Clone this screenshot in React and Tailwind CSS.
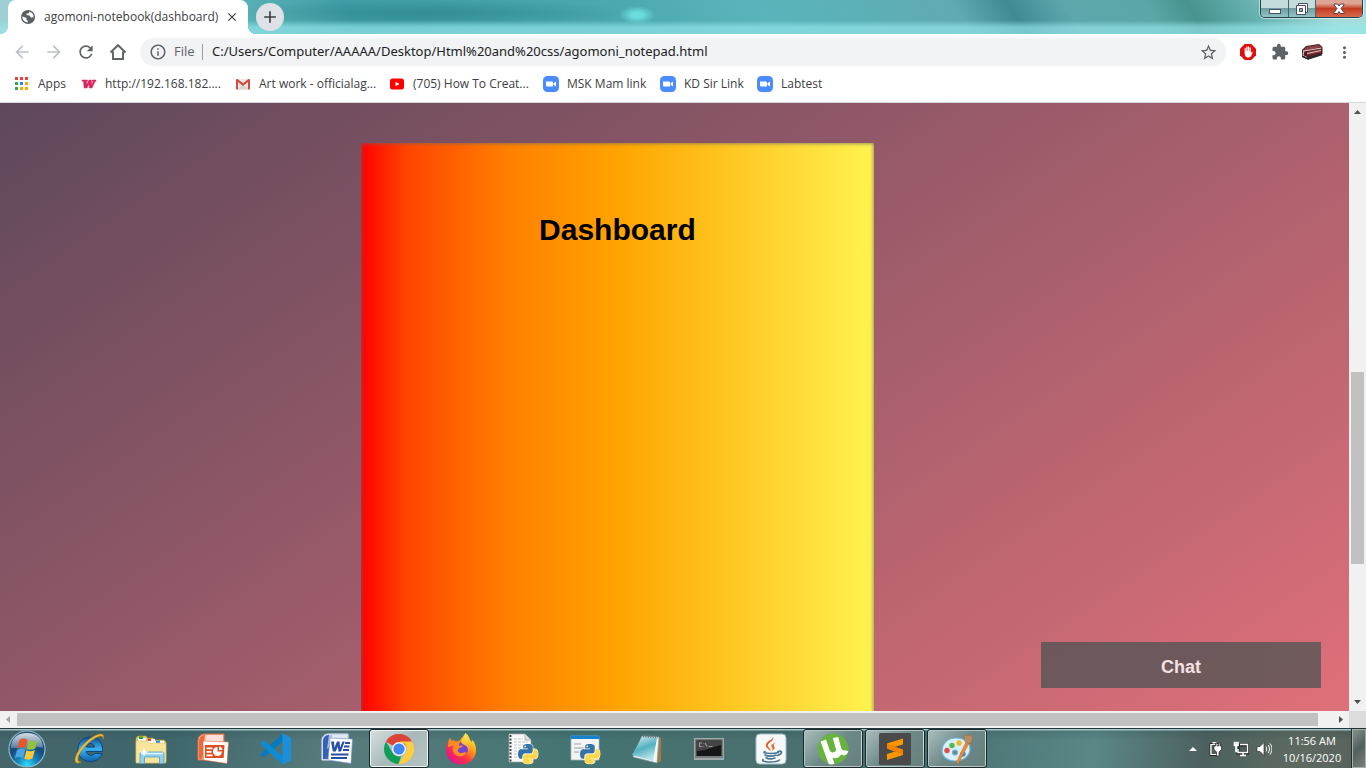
import React from "react";
import {
  MdArrowBack,
  MdArrowForward,
  MdRefresh,
  MdOutlineInfo,
  MdStarBorder,
  MdExtension,
  MdMoreVert,
  MdClose,
  MdAdd,
} from "react-icons/md";

const UI = "font-['Open_Sans','Noto_Sans',sans-serif]";

/* ---------- Title bar ---------- */

function WindowControls() {
  return (
    <div className="flex h-[18px] self-start mr-[3px] rounded-b-[5px] border border-t-0 border-[#20464c] overflow-hidden shadow-[0_0_0_1px_rgba(255,255,255,0.5)]">
      <button aria-label="Minimize" className="w-7 flex items-center justify-center border-r border-[#41686c] bg-linear-to-b from-[#c2dddc] from-45% via-[#6f9fa1] via-50% to-[#93c5c5]">
        <svg width="14" height="14" viewBox="0 0 14 14">
          <rect x="1.500" y="7.500" width="11" height="4" fill="#fff" stroke="#4a4f66" />
        </svg>
      </button>
      <button aria-label="Restore" className="w-[27px] flex items-center justify-center border-r border-[#41686c] bg-linear-to-b from-[#c2dddc] from-45% via-[#6f9fa1] via-50% to-[#93c5c5]">
        <svg width="14" height="14" viewBox="0 0 14 14">
          <path d="M3.500 1.500h9v9h-9z" fill="#fff" stroke="#4a4f66" />
          <path d="M1.500 3.500h9v9h-9z" fill="#fff" stroke="#4a4f66" />
          <path d="M4.500 6.500h3v3h-3z" fill="#8bb4b5" stroke="#4a4f66" />
        </svg>
      </button>
      <button aria-label="Close" className="w-[46px] flex items-center justify-center bg-linear-to-b from-[#dda596] from-20% via-[#c43a20] via-50% to-[#d8694b]">
        <svg width="14" height="12" viewBox="0 0 14 12">
          <path d="M2 1h3.500L7 3 8.500 1H12v1L9 5.500l3 4v1H8.500L7 8.500l-1.500 2H2v-1l3-4L2 2z" fill="#fff" stroke="#54404e" strokeWidth="1" />
        </svg>
      </button>
    </div>
  );
}

function GlobeIcon() {
  return (
    <svg width="16" height="16" viewBox="0 0 16 16">
      <circle cx="8" cy="8" r="7" fill="#5a5e63" />
      <path d="M2.300 6.800c.4 1 1 1.300 2.200 1.400 1.600.1 2.200.7 2 1.700-.2.800.2 1.300 1 1.600.6.300.4 1.300.2 2-3.300-.2-5.600-2.800-5.400-6.700z" fill="#fff" />
      <path d="M9.500 2.500c-.2 1.300-.8 1.900-2 2-.9 0-1.200.5-1 1.200.3.700 1 .6 2 .6 1.300 0 1.700.8 2 1.600.3.700 1 .8 1.700.5.7-.2 1 .1 1.200.3.500-2.900-1-5.400-3.900-6.200z" fill="#fff" />
    </svg>
  );
}

function HomeIcon() {
  return (
    <svg width="20" height="20" viewBox="0 0 20 20">
      <path d="M2.500 10.500 10 3.200l7.500 7.300M5 9.500V17h10V9.500" fill="none" stroke="#5f6368" strokeWidth="1.900" />
    </svg>
  );
}

function TitleBar() {
  return (
    <div className="flex h-[34px] shrink-0 bg-[linear-gradient(180deg,transparent_60%,rgba(150,232,236,0.65)_80%,rgba(150,232,236,0.65)_100%),radial-gradient(ellipse_18px_9px_at_637px_15px,#6bdcdd_30%,transparent_100%),radial-gradient(ellipse_200px_14px_at_430px_13px,rgba(25,115,120,0.45),transparent),linear-gradient(60deg,#9fcfd4_0%,#9ad0d3_3%,#65bcc0_14%,#429fa7_26%,#4aa7ae_44%,#5ab4bb_56%,#5fabb1_70%,#3f8b93_74%,#5da6ab_78%,#59a7a8_84%,#48928f_87%,#62afae_91%,#a5dcda_97%)]">
      <div className="ml-2 relative flex w-60 items-center rounded-t-lg bg-white pl-3 pr-2">
        <span className="absolute -left-2 bottom-0 size-2 bg-[radial-gradient(circle_at_0_0,transparent_8px,#fff_8px)]" />
        <span className="absolute -right-2 bottom-0 size-2 bg-[radial-gradient(circle_at_100%_0,transparent_8px,#fff_8px)]" />
        <GlobeIcon />
        <span className="ml-2 flex-1 whitespace-nowrap text-xs text-[#3c4043]">agomoni-notebook(dashboard)</span>
        <button aria-label="Close tab" className="flex size-4 items-center justify-center">
          <MdClose size={14} color="#3c4043" />
        </button>
      </div>
      <button aria-label="New tab" className="ml-2 mt-[3px] flex size-7 items-center justify-center rounded-full bg-[#dee1e6]">
        <MdAdd size={20} color="#3c4043" />
      </button>
      <div className="flex-1" />
      <WindowControls />
    </div>
  );
}

/* ---------- Toolbar ---------- */

function StopHandIcon() {
  return (
    <svg width="16" height="16" viewBox="0 0 16 16">
      <path d="M4.700 0h6.600L16 4.700v6.600L11.300 16H4.700L0 11.300V4.700z" fill="#e40d0d" />
      <path d="M4.600 8.500V4.600c0-.9 1.200-.9 1.200 0V7h.4V3.300c0-1 1.300-1 1.300 0V7h.4V2.900c0-1 1.300-1 1.300 0V7h.4V3.900c0-1 1.200-1 1.200 0v5.300l.6-1.100c.5-.8 1.500-.4 1.200.5l-1.300 3.200c-.5 1.100-1.300 1.700-2.700 1.700-2.500 0-4-1.300-4-5z" fill="#fff" />
    </svg>
  );
}

function AvatarIcon() {
  return (
    <svg width="22" height="16" viewBox="0 0 22 16">
      <path d="M1 6 5 2l13-2 3.500 3v7L7 15.500 1 13z" fill="#4a1f22" />
      <path d="M5.500 3 17.500 1l2.500 2L6 6.500 3 5.500z" fill="#8d4346" />
      <path d="m6 8 14-3.500v4L6.500 12z" fill="#7a2c30" />
      <path d="m2 7 4-.5L20.500 4M6 9.500l14-3M3 6.500l-1 5 4 2" fill="none" stroke="#e3cfcd" strokeWidth="1" />
      <path d="M2 12.500 7 15l14-4.500" fill="none" stroke="#26262c" strokeWidth="1.500" />
    </svg>
  );
}

function Toolbar() {
  return (
    <div className="flex h-9 shrink-0 items-center bg-white">
      <nav className="flex w-[140px] shrink-0 items-center gap-3 pl-3">
        <button aria-label="Back"><MdArrowBack size={20} color="#bdc1c6" /></button>
        <button aria-label="Forward"><MdArrowForward size={20} color="#bdc1c6" /></button>
        <button aria-label="Reload"><MdRefresh size={20} color="#5f6368" /></button>
        <button aria-label="Home"><HomeIcon /></button>
      </nav>
      <div className="flex h-7 flex-1 items-center rounded-full bg-[#f1f3f4] pl-[9px] pr-2">
        <MdOutlineInfo size={18} color="#5f6368" />
        <label htmlFor="address" className="ml-[7px] w-[28px] text-[13px] text-[#5f6368]">File</label>
        <span className="h-4 w-px bg-[#9aa0a6]" />
        <input
          id="address"
          type="text"
          defaultValue="C:/Users/Computer/AAAAA/Desktop/Html%20and%20css/agomoni_notepad.html"
          className="ml-[9px] flex-1 bg-transparent font-['Noto_Sans',sans-serif] text-[13px] text-[#202124] outline-none"
        />
        <button aria-label="Bookmark this page"><MdStarBorder size={19} color="#5f6368" /></button>
      </div>
      <div className="flex w-[140px] shrink-0 items-center pl-[14px]">
        <button aria-label="Ad blocker"><StopHandIcon /></button>
        <button aria-label="Extensions" className="ml-[15px]"><MdExtension size={18} color="#5f6368" /></button>
        <button aria-label="Profile" className="ml-3"><AvatarIcon /></button>
        <button aria-label="Menu" className="ml-3"><MdMoreVert size={19} color="#5f6368" /></button>
      </div>
    </div>
  );
}

/* ---------- Bookmarks ---------- */

function AppsIcon() {
  const colors = ["#ea4335", "#ea4335", "#ea4335", "#34a853", "#1a8cff", "#f9ab00", "#34a853", "#f9ab00", "#f9ab00"];
  return (
    <svg width="16" height="16" viewBox="0 0 16 16">
      {colors.map((c, i) => (
        <rect key={i} x={1 + (i % 3) * 5} y={1 + Math.floor(i / 3) * 5} width="3" height="3" fill={c} />
      ))}
    </svg>
  );
}

function WIcon() {
  return (
    <svg width="16" height="16" viewBox="0 0 16 16">
      <path d="M1 4h5.500v1.200h-1l.2 3.600L8 4h2.300l.4 4.800L12.400 5.200h-1.200V4H15v1.200h-.8L11 12H8.400l-.5-4L6 12H3.200L2.400 5.200H1z" fill="#d8245f" stroke="#d8245f" strokeWidth=".5" />
    </svg>
  );
}

function GmailIcon() {
  return (
    <svg width="16" height="16" viewBox="0 0 16 16">
      <rect x="1" y="3" width="14" height="10.500" rx="1" fill="#eceae8" />
      <path d="m8 8.500 6 5H2z" fill="#d8d6d5" />
      <path d="M1 4.200C1 3 2.200 2.700 3 3.300l5 4 5-4c.8-.6 2-.3 2 .9v8.300a1 1 0 0 1-1 1h-1V6L8 10 3 6v7.500H2a1 1 0 0 1-1-1z" fill="#d54b3d" />
    </svg>
  );
}

function YoutubeIcon() {
  return (
    <svg width="16" height="16" viewBox="0 0 16 16">
      <rect x="1" y="2.500" width="14" height="11" rx="2.500" fill="#f00" />
      <path d="m6.500 5.700 4 2.300-4 2.300z" fill="#fff" />
    </svg>
  );
}

function ZoomIcon() {
  return (
    <svg width="16" height="16" viewBox="0 0 16 16">
      <rect width="16" height="16" rx="4.500" fill="#4a8cff" />
      <path d="M3 5.500h5.500c1 0 1.500.5 1.500 1.500v3.500H4.500C3.500 10.500 3 10 3 9zM10.500 7.200 13 5.500v5l-2.500-1.700z" fill="#fff" />
    </svg>
  );
}

const BOOKMARKS = [
  { label: "Apps", Icon: AppsIcon, w: "w-[67px]" },
  { label: "http://192.168.182....", Icon: WIcon, w: "w-[154px]" },
  { label: "Art work - officialag...", Icon: GmailIcon, w: "w-[154px]" },
  { label: "(705) How To Creat...", Icon: YoutubeIcon, w: "w-[154px]" },
  { label: "MSK Mam link", Icon: ZoomIcon, w: "w-[117px]" },
  { label: "KD Sir Link", Icon: ZoomIcon, w: "w-[97px]" },
  { label: "Labtest", Icon: ZoomIcon, w: "w-[80px]" },
];

function Bookmarks() {
  return (
    <div className="flex h-[33px] shrink-0 items-start border-b border-[#d5d7da] bg-white pl-[14px] pt-1.5">
      {BOOKMARKS.map(({ label, Icon, w }) => (
        <a key={label} href="#" className={`flex shrink-0 items-center gap-2 whitespace-nowrap text-xs leading-4 text-[#3c4043] ${w}`}>
          <Icon />
          {label}
        </a>
      ))}
    </div>
  );
}

/* ---------- Page ---------- */

function Page() {
  return (
    <main className="relative min-w-0 flex-1 overflow-hidden bg-[linear-gradient(146deg,#5e485b,#df7079)] pl-[361px] pt-10 font-['Liberation_Sans',Arial,sans-serif]">
      <section className="h-[120%] w-[51.9%] bg-[linear-gradient(to_right,#ff0000,#ff4500_9%,#ff8000_29%,#ffa500_51%,#fff350)] pt-[70px] shadow-[inset_0_0_4px_#666]">
        <h1 className="text-center text-[30px] leading-[34px] font-bold text-black">Dashboard</h1>
      </section>
      <button className="absolute right-7 bottom-[23px] h-[46px] w-[280px] bg-[#555] text-lg font-bold text-white opacity-80 pt-1">Chat</button>
    </main>
  );
}

function Arrow({ d, color }) {
  return (
    <svg width="17" height="17" viewBox="0 0 17 17">
      <path d={d} fill={color} />
    </svg>
  );
}

function VerticalScrollbar() {
  return (
    <div className="flex w-[17px] shrink-0 flex-col bg-[#f1f1f1]">
      <button aria-label="Scroll up"><Arrow d="M5 11h7L8.500 7z" color="#505050" /></button>
      <div className="flex-[252]" />
      <div className="mx-0.5 flex-[192] bg-[#c1c1c1]" />
      <div className="flex-[130]" />
      <button aria-label="Scroll down"><Arrow d="M5 6h7l-3.500 4z" color="#505050" /></button>
    </div>
  );
}

function HorizontalScrollbar() {
  return (
    <div className="flex h-[17px] shrink-0 bg-[#f1f1f1]">
      <button aria-label="Scroll left"><Arrow d="M10 5v7L6 8.500z" color="#a3a3a3" /></button>
      <div className="my-0.5 flex-1 bg-[#c1c1c1]" />
      <div className="w-3.5" />
      <button aria-label="Scroll right"><Arrow d="M7 5v7l4-3.500z" color="#505050" /></button>
      <div className="w-[17px] bg-[#dcdcdc]" />
    </div>
  );
}

/* ---------- Taskbar icons (32 x 32) ---------- */

function Svg({ children }) {
  return (
    <svg width="32" height="32" viewBox="0 0 32 32">
      {children}
    </svg>
  );
}

function StartOrb() {
  return (
    <svg width="38" height="38" viewBox="0 0 38 38">
      <defs>
        <radialGradient id="orb" cx="50%" cy="95%" r="90%">
          <stop offset="0" stopColor="#2fe0ff" />
          <stop offset=".3" stopColor="#1687bd" />
          <stop offset=".6" stopColor="#184d7c" />
          <stop offset="1" stopColor="#2c5577" />
        </radialGradient>
        <linearGradient id="orbShine" x1="0" y1="0" x2="0" y2="1">
          <stop offset="0" stopColor="#fff" stopOpacity=".8" />
          <stop offset="1" stopColor="#fff" stopOpacity=".2" />
        </linearGradient>
      </defs>
      <circle cx="19" cy="19" r="18" fill="url(#orb)" stroke="#8bb7cb" strokeWidth="1.200" />
      <path d="M3 18C3 8 10 3 19 3s16 5 16 15c-7-3-11 2-17 2S8 17 3 18z" fill="url(#orbShine)" />
      <path d="M11.500 10c3-2 5.500-1.700 8-.3l-2 8.300c-2.500-1.300-5.300-1.200-8.200.3z" fill="#e8562a" />
      <path d="M20.800 10.500c3 1.500 5.500 1.500 8.700-.5l-2.300 8.500c-2.800 1.700-5.500 1.600-8.400.2z" fill="#91c33f" />
      <path d="M9 19.800c2.800-1.500 5.500-1.500 8.200-.2L15 28c-2.600-1.500-5.300-1.300-8.200.2z" fill="#4ba5e0" />
      <path d="M18.500 20.300c2.800 1.400 5.500 1.300 8.400-.4l-2.300 8.400c-2.900 1.900-5.600 1.700-8.300.2z" fill="#fbc83a" />
    </svg>
  );
}

function IEIcon() {
  return (
    <Svg>
      <defs>
        <linearGradient id="ie" x1="0" y1="0" x2="0" y2="1">
          <stop offset="0" stopColor="#0f4f97" />
          <stop offset=".5" stopColor="#38b1ec" />
          <stop offset="1" stopColor="#0f62ad" />
        </linearGradient>
      </defs>
      <path d="M29.500 18.500H13.500c.2 2.500 2 3.700 4.300 3.700 1.700 0 3-.6 3.700-1.700h7.500c-1.500 5-5.500 8-11.300 8C10.500 28.500 5 24 5 16.500S10.300 4 17.700 4s12.300 5 11.800 14.500zM13.500 14h8c-.3-2.300-1.900-3.500-4-3.500s-3.600 1.300-4 3.500z" fill="url(#ie)" stroke="#0d4480" strokeWidth="1" />
      <path d="M8 29C2 32 .3 28 4 20.500 8.500 12 17.500 4 25 1.500c5-1.600 6.500.5 5 4.500.2-3-1.300-3.700-4.500-2.500C18 6.500 9 15 6 22c-2.200 5-1.200 7 2 7z" fill="#f2bd32" stroke="#bd861b" strokeWidth=".5" />
    </Svg>
  );
}

function ExplorerIcon() {
  return (
    <Svg>
      <path d="M1 30V5l2-2h8l1.500 2H18l1.500 2H29l2 2v21z" fill="#e5c866" stroke="#b99c43" strokeWidth=".6" />
      <path d="M3 5h8v4H3zM12 6h8v4h-8zM20 8h9v4h-9z" fill="#fff" />
      <path d="M4 3.500h4V6H4z" fill="#19a62f" />
      <path d="M12.500 5.500h3.500V8h-3.500z" fill="#e3402f" />
      <path d="M21 7.500h4V10h-4z" fill="#2b94e6" />
      <path d="M1 8h11l2 2h17v18c0 1-1 2-2 2H2c-1 0-1-1-1-2z" fill="#f6e59a" stroke="#d6bd66" strokeWidth=".6" />
      <path d="M5 30.500V21c0-1.200.8-2 2-2h20c1.200 0 2 .8 2 2v9.500h-4.500V24h-15v6.500z" fill="#8fd0ee" stroke="#4e9cc8" strokeWidth=".8" />
      <path d="M6 20.500h22" stroke="#e1f6ff" strokeWidth="1.500" />
      <path d="m9 14 1 4 4 1-4 1-1 4-1-4-4-1 4-1z" fill="#fff" />
    </Svg>
  );
}

function PowerPointIcon() {
  return (
    <Svg>
      <path d="M1 27V8c0-5 3-7 7-7h19v26z" fill="#f5b49d" stroke="#e2683c" strokeWidth="1" />
      <path d="M2 26V9c0-4 2-7 6-7h2L5 26z" fill="#e86b3c" />
      <path d="M8 2h18v6c-9 0-14 3-20 9z" fill="#fff" opacity=".6" />
      <path d="m6 8 25.500 1L30 30.500 6.500 27z" fill="#fff" stroke="#df6d42" strokeWidth=".6" />
      <path d="M8 12h19.500l-.8 13H8z" fill="#dd4f20" />
      <circle cx="20.500" cy="18.500" r="4.500" fill="#fff" />
      <path d="M20.500 18.500v-5.500h5.500v5.500z" fill="#dd4f20" />
      <path d="M22 17v-3.400c2 .2 3.200 1.400 3.400 3.400z" fill="#fff" />
      <path d="M9.500 14.500h6v1.800h-6zM9.500 18h5v1.800h-5zM9.500 21.500h6v1.800h-6z" fill="#fff" />
    </Svg>
  );
}

function CodeIcon() {
  return (
    <Svg>
      <path d="M23 1 2 20.500c-.6.6-.6 1.300 0 1.900l1.600 1.400c.5.500 1.200.500 1.700.100L23.500 9z" fill="#0879bd" />
      <path d="M23 31 2 11.500c-.6-.6-.6-1.300 0-1.900l1.600-1.400c.5-.5 1.200-.5 1.700-.1L23.500 23z" fill="#0a8cd7" />
      <path d="M22.500 31c.8.300 1.500.2 2-.1l6.400-3c.7-.3 1.100-1 1.100-1.800V5.900c0-.8-.4-1.500-1.100-1.800l-6.400-3c-.6-.3-1.300-.3-2-.1.700.5 1 1.200 1 2v26c0 .9-.3 1.600-1 2z" fill="#1c8fdc" />
    </Svg>
  );
}

function WordIcon() {
  return (
    <Svg>
      <path d="M1 27V8c0-5 3-7 7-7h19v26z" fill="#b3c7ee" stroke="#e8eefa" />
      <path d="M2 26V9c0-4 2-7 6-7h3L7 26z" fill="#3561b7" />
      <path d="M8 2h18v5c-9 0-14 3-20 9z" fill="#fff" opacity=".6" />
      <path d="m9 5 22.500 1L30 30.500 7 27z" fill="#fff" stroke="#7894cb" strokeWidth=".7" />
      <path d="M10 8.500h3l.4 6L16 8.500h2.600l.4 6 2.500-6h2.200L20 18.500h-2.600l-.5-5-2.200 5h-2.900z" fill="#274fa8" />
      <path d="M24 10h5M23 13.500h5.500M22 17h6M10 21.500h17.500M10 25h16" stroke="#274fa8" strokeWidth="2" />
    </Svg>
  );
}

function ChromeIcon() {
  return (
    <Svg>
      <path d="M16 1a15 15 0 0 1 13 7.500H16a7.500 7.500 0 0 0-6.500 3.750L3 8.500A15 15 0 0 1 16 1z" fill="#db4437" />
      <path d="M16 16 3.010 8.500A15 15 0 0 1 28.990 8.500z" fill="#db4437" />
      <path d="M3 8.500 9.500 19.750A7.500 7.500 0 0 0 16 23.500l2-.3L15.500 31A15 15 0 0 1 3 8.500z" fill="#0f9d58" />
      <path d="M29 8.500A15 15 0 0 1 15.500 31l7-11.250A7.500 7.500 0 0 0 22 11l-6-2.500z" fill="#ffcd40" />
      <circle cx="16" cy="16" r="7" fill="#f1f1f1" />
      <circle cx="16" cy="16" r="5.600" fill="#4285f4" />
    </Svg>
  );
}

function FirefoxIcon() {
  return (
    <Svg>
      <defs>
        <linearGradient id="fox" x1=".9" y1=".1" x2=".2" y2=".9">
          <stop offset="0" stopColor="#fff44f" />
          <stop offset=".35" stopColor="#ff980e" />
          <stop offset=".65" stopColor="#ff3647" />
          <stop offset="1" stopColor="#e31587" />
        </linearGradient>
        <linearGradient id="foxTail" x1="0" y1="0" x2="0" y2="1">
          <stop offset="0" stopColor="#fff36b" />
          <stop offset=".55" stopColor="#ffba27" />
          <stop offset="1" stopColor="#ff712c" />
        </linearGradient>
      </defs>
      <path d="M20.500 0c3 2 4 4.700 4.500 7l2 2.500-.3-3C30 9.500 31 13 31 17c0 8.500-6.500 14.500-15 14.500S1 25.500 1 17c0-4 1.200-7.200 3-9.500L5 5l1.500 2.500c1.700-.3 3 .2 4.200 1l4-1C16 5 18.500 3.500 20.500 0z" fill="url(#fox)" />
      <path d="M16 9c4 0 7 3 7 7s-3 7-7 7-7-3-7-7 3-7 7-7z" fill="#7443d5" />
      <path d="M20.500 0c-.5 4-3 5.500-4 7.500-1 2.300.5 3.500 3 4.500 4 2 4.500 6 2.500 9 6-2 5-9 3-12-1-2-4-5-4.500-9z" fill="url(#foxTail)" />
      <path d="M3.500 8 5 5l1.500 2.800c2-.5 3.500 0 4.500 1l4.500-.8-2 4.500h4.300c0 2-3.800 2-4.800 4-.7 1.500.3 3.500 3.500 3.500 2 0 3-1 5-.5-2 3.500-5.500 4.500-8.500 3.500-5-1.500-6.500-7-4.500-10.500L3 14z" fill="#ff8c22" />
    </Svg>
  );
}

function PythonMark() {
  return (
    <g transform="translate(11 11) scale(.078)">
      <path d="M126.900 0C62 0 66.100 28.200 66.100 28.200v29.100H128v8.700H41.600S.1 61.400.1 126.800s36.200 63.100 36.200 63.100H58v-30.400s-1.200-36.200 35.600-36.200H155s34.400.6 34.400-33.300V34S194.700 0 126.900 0zM92.800 19.700a11 11 0 1 1 0 22.200 11 11 0 0 1 0-22.200z" fill="#3573a6" stroke="#fff" strokeWidth="14" paintOrder="stroke" />
      <path d="M128.800 254.100c64.800 0 60.700-28.100 60.700-28.100v-29.100h-61.900v-8.800H214s41.500 4.700 41.500-60.700-36.200-63.100-36.200-63.100h-21.600v30.400s1.200 36.200-35.600 36.200h-61.400s-34.500-.6-34.500 33.300v56s-5.200 33.900 62.600 33.900zm34.100-19.600a11 11 0 1 1 0-22.200 11 11 0 0 1 0 22.200z" fill="#ffd84a" stroke="#fff" strokeWidth="14" paintOrder="stroke" />
    </g>
  );
}

function PythonFileIcon() {
  return (
    <Svg>
      <path d="M2 1h16l6 6v22H2z" fill="#f8f8f8" stroke="#a7adad" strokeWidth=".7" />
      <path d="M18 1v6h6" fill="#ddd" stroke="#9aa0a0" strokeWidth=".7" />
      <path d="M3.500 2v27" stroke="#454b4b" strokeWidth="2" strokeDasharray="2 1.500" />
      <path d="M7 6h9M7 9h14M7 12h14M7 15h8M7 18h5M7 21h4M7 24h5" stroke="#c6c9c9" strokeDasharray="3 1" />
      <PythonMark />
    </Svg>
  );
}

function PythonWindowIcon() {
  return (
    <Svg>
      <path d="M2 3h28v24H2z" fill="#f3f4f4" stroke="#a9b3b3" strokeWidth=".8" />
      <path d="M1.500 2.500h29V6h-29z" fill="#1681cc" />
      <path d="M5 11h7M5 15h13M5 19h5" stroke="#999fa2" strokeWidth="1.200" />
      <PythonMark />
    </Svg>
  );
}

function NotepadIcon() {
  return (
    <Svg>
      <defs>
        <linearGradient id="note" x1="0" y1="0" x2=".4" y2="1">
          <stop offset="0" stopColor="#d4f0f4" />
          <stop offset=".55" stopColor="#54b0c0" />
          <stop offset="1" stopColor="#b4e4e9" />
        </linearGradient>
      </defs>
      <path d="m27 4 3 1v23l-4 2z" fill="#a17b42" />
      <path d="m11 3 17 1-2 26-24-6z" fill="#f3f7f7" stroke="#809c9d" strokeWidth=".7" />
      <path d="m11 4 15 1-4 23L1 22z" fill="url(#note)" />
      <path d="m12 3 15 1" stroke="#68777a" strokeWidth="3" strokeDasharray="1.200 1.200" />
    </Svg>
  );
}

function CmdIcon() {
  return (
    <Svg>
      <path d="M1 5h30v22H1z" fill="#a4a8a8" />
      <path d="M2 6h28v19H2z" fill="#777c7c" />
      <path d="M3.500 7.500h25V23h-25z" fill="#161616" />
      <path d="M3.500 7.500h25V12c-9 2-17 6-25 6z" fill="#454545" />
      <path d="M9 10H6.500v3.500H9M10.500 10.500v.5M10.500 13v.5M12 10l2 3.500M15.500 13.500h4" fill="none" stroke="#969a9a" strokeWidth="1.100" />
      <path d="M27 25.500h2" stroke="#55c4e8" strokeWidth="1.500" />
    </Svg>
  );
}

function JavaIcon() {
  return (
    <Svg>
      <rect x="1" y="1" width="30" height="30" rx="4" fill="#f6f8f8" stroke="#9dbfca" />
      <path d="M18 4c2 4-6 5.500-5 9 .5 2 2.500 2.500 3 5-5-3-6.500-5.500-4-8.500C14 7 18 6.500 18 4zM20.500 9.500c-4 1.500-5 3-3.500 5 1 1.500.5 2.500-.5 3.500 4-2 3.500-3.500 2.500-5-1-1.300 0-2.300 1.500-3.500z" fill="#df672f" />
      <g fill="none" stroke="#497392" strokeWidth="1.600" strokeLinecap="round">
        <path d="M10 18.500c-3 1.500 1 2 5.500 2s8-1 8-1M10 22c2 1.500 8 1.500 11 0M11 24.800c2 1.200 6 1.200 9 .2M23 18.500c5-1.500 4.500 2.500-.5 4" />
        <path d="M8 26.500c-3 3 13 3.500 16.500.5" />
      </g>
    </Svg>
  );
}

function TorrentIcon() {
  return (
    <Svg>
      <circle cx="16" cy="16" r="15.500" fill="#68b240" />
      <path d="m3.500 8.500 5.500-2 3.500 10.200c.8 2.300 2.200 3 4 2.600 2-.4 3-1.800 2.200-4.100L15.800 5l5.400-1 3 11c.6 2 1.800 3 4.200 2.300l3 1c-1.200 4-4.500 5-7.400 3.300-1.500 3.200-5 4.300-8.500 3l2 6.200c-2.300 1-4.500.9-6-.2z" fill="#fff" />
    </Svg>
  );
}

function SublimeIcon() {
  return (
    <Svg>
      <rect width="32" height="32" rx="1.500" fill="#4a4a4a" />
      <path d="m8 10.500 16-5v6L15 14l9 2.800V22L8 27v-6l9-2.700L8 15.500z" fill="#ff9800" />
      <path d="m8 10.500 16 6.300V22L8 15.500z" fill="#f08400" />
    </Svg>
  );
}

function PaintIcon() {
  return (
    <Svg>
      <path d="M15 5C6 5 1 11 1 18c0 6 6 10 13 10 8 0 15-5 15-12S23 5 15 5zm-1 12a2.500 2.500 0 1 1 0 5 2.500 2.500 0 0 1 0-5z" fill="#d9effa" stroke="#6db5df" strokeWidth="1.200" fillRule="evenodd" />
      <circle cx="6" cy="17.500" r="2.700" fill="#e34a42" />
      <circle cx="11" cy="12.500" r="2.700" fill="#54b948" />
      <circle cx="18" cy="10" r="2.700" fill="#f2b62c" />
      <circle cx="22" cy="21" r="2.700" fill="#3e8de0" />
      <path d="m25 9 3 1.200L18 29.500c-1 2-3 1.500-2.500-.5z" fill="#ee8b2f" stroke="#bf621a" strokeWidth=".5" />
      <path d="m24.500 9 3.500 1.500c4-1 4-5 2.500-9L27 3l-3-1.500c-1.500 3-1 5.500.5 7.500z" fill="#b78e61" stroke="#8f6841" strokeWidth=".5" />
    </Svg>
  );
}

const APPS = [
  { name: "Internet Explorer", Icon: IEIcon },
  { name: "Windows Explorer", Icon: ExplorerIcon },
  { name: "PowerPoint", Icon: PowerPointIcon },
  { name: "Visual Studio Code", Icon: CodeIcon },
  { name: "Word", Icon: WordIcon },
  { name: "Chrome", Icon: ChromeIcon, state: "active" },
  { name: "Firefox", Icon: FirefoxIcon },
  { name: "Python file", Icon: PythonFileIcon },
  { name: "Python", Icon: PythonWindowIcon },
  { name: "Notepad", Icon: NotepadIcon },
  { name: "Command Prompt", Icon: CmdIcon },
  { name: "Java", Icon: JavaIcon },
  { name: "uTorrent", Icon: TorrentIcon, state: "open" },
  { name: "Sublime Text", Icon: SublimeIcon, state: "open" },
  { name: "Paint", Icon: PaintIcon, state: "open" },
];

const STATES = {
  active: "border border-white/80 outline outline-[#19292b] bg-linear-135 from-[#d5dfdf] via-[#a7b9b9] to-[#b5c3c2]",
  open: "border border-white/50 outline outline-[#19292b] bg-linear-135 from-[#a9bcbb] via-[#6c8988] to-[#67807d]",
};

function TrayIcons() {
  return (
    <div className="flex items-center">
      <button aria-label="Show hidden icons" className="mr-[9px]">
        <svg width="12" height="16" viewBox="0 0 12 16"><path d="m2 10 4-4 4 4z" fill="#fff" /></svg>
      </button>
      <svg width="16" height="16" viewBox="0 0 16 16" className="mr-[9px]">
        <path d="M2 2.500h8v12H2z" fill="#dfe5e4" stroke="#222" strokeWidth="1" />
        <path d="M3 3.500h7v10H3z" fill="#4b5d5d" stroke="#fff" strokeWidth="1.200" />
        <path d="M4.500 1h4v1.500h-4z" fill="#fff" />
        <path d="M7.500 2v3H6v3.500L8.500 11v4h2.500v-4l2.500-2.500V5h-1.500V2h-1.500v3H9V2z" fill="#fff" stroke="#222" strokeWidth=".7" />
      </svg>
      <svg width="16" height="16" viewBox="0 0 16 16" className="mr-[7px]">
        <path d="M5 4h9.500v8H5z" fill="#4b5d5d" stroke="#222" strokeWidth="3" />
        <path d="M7 3.500h7.500v8H5V8M7 14.500h6M10 12v2" fill="none" stroke="#fff" strokeWidth="1.500" />
        <path d="M1 1v4h1.500v6H4V5h1.500V1H4.500v2h-.7V1H2.700v2H2V1z" fill="#fff" stroke="#fff" strokeWidth=".6" />
      </svg>
      <svg width="16" height="16" viewBox="0 0 16 16">
        <path d="M1 5.500h3L8 1.500v13l-4-4H1z" fill="#fff" stroke="#333" strokeWidth=".7" />
        <path d="M10 5.500c1 1.500 1 3.500 0 5M12 4c2 2.500 2 5.500 0 8M14 2.500c2.500 3.500 2.500 7.500 0 11" fill="none" stroke="#fff" strokeWidth="1" />
      </svg>
    </div>
  );
}

function Taskbar() {
  return (
    <footer className="flex h-10 shrink-0 border-t border-[#23383d] bg-[linear-gradient(to_bottom,#a4c4c6_0,#a4c4c6_1px,rgba(20,50,55,0.15)_2px,transparent_12px),linear-gradient(100deg,#45666a_0%,#3e666b_12%,#587c7d_25%,#447472_42%,#4a706e_55%,#487071_68%,#5b8787_80%,#4c615f_88%,#5e6a60_95%,#55615b_100%)]">
      <button aria-label="Start" className="flex w-[58px] items-center justify-start pl-2"><StartOrb /></button>
      {APPS.map(({ name, Icon, state }) => (
        <div key={name} className="flex w-[62px] px-0.5 pb-px pt-px">
          <button aria-label={name} className={`flex flex-1 items-center justify-center rounded-xs ${state ? STATES[state] : ""}`}>
            <Icon />
          </button>
        </div>
      ))}
      <div className="flex-1" />
      <TrayIcons />
      <time className="flex w-[80px] flex-col items-center justify-center text-center text-[11px] leading-[17px] text-white">
        <span>11:56 AM</span>
        <span>10/16/2020</span>
      </time>
      <button aria-label="Show desktop" className="w-[14px] border border-[#a5b0ac] bg-linear-135 from-[#83908b] via-[#52605b] to-[#79827d] outline outline-[#222f30]" />
    </footer>
  );
}

export default function App() {
  return (
    <div className={`flex h-screen flex-col overflow-hidden ${UI}`}>
      <TitleBar />
      <Toolbar />
      <Bookmarks />
      <div className="flex min-h-0 flex-1">
        <Page />
        <VerticalScrollbar />
      </div>
      <HorizontalScrollbar />
      <Taskbar />
    </div>
  );
}
